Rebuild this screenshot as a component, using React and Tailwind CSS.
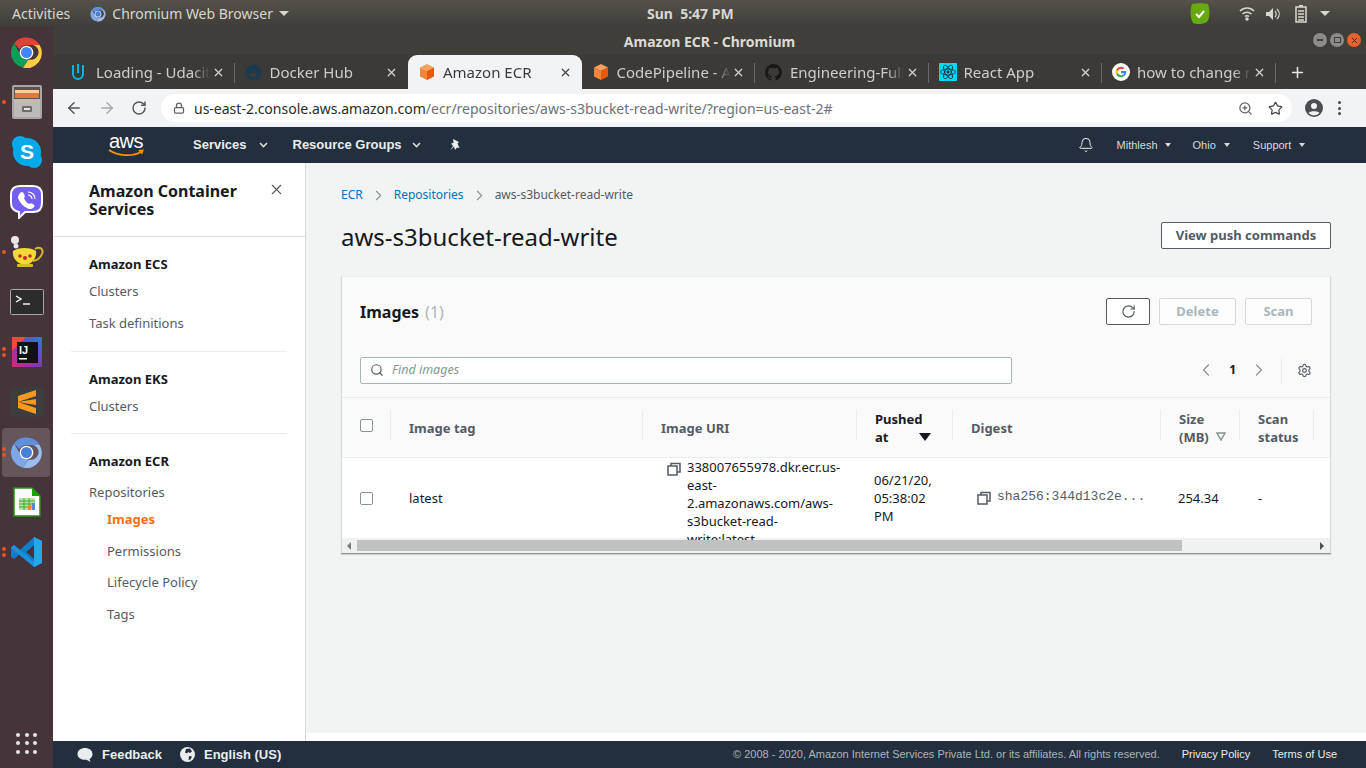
import React from "react";
import { ArrowLeft, ArrowRight, RotateCw, Lock, Search, ZoomIn, Star, Bell, X, Plus, ChevronLeft, ChevronRight, Settings } from "lucide-react";

const ubuntu = "font-['Noto_Sans',sans-serif]";
const arial = "font-['Liberation_Sans',Arial,sans-serif]";

/* ── Small drawn icons ─────────────────────────── */
function ChromeLogo({ size = 34, washed = false }) {
  const c = washed
    ? ["#5f8fe0", "#7fa6e8", "#9cbcf0", "#4a7fd8", "#fff"]
    : ["#db4437", "#0f9d58", "#ffcd40", "#4285f4", "#fff"];
  return (
    <svg width={size} height={size} viewBox="0 0 48 48">
      <path fill={c[0]} d="M24 2a22 22 0 0 1 19 11H24a11 11 0 0 0-10 6L6 11A22 22 0 0 1 24 2z" />
      <path fill={c[1]} d="M6 11l9.500 17a11 11 0 0 0 11.500 6L19 46A22 22 0 0 1 6 11z" />
      <path fill={c[2]} d="M43 13a22 22 0 0 1-24 33l8-12a11 11 0 0 0 7-21z" />
      <circle cx="24" cy="24" r="10" fill={c[4]} />
      <circle cx="24" cy="24" r="8" fill={c[3]} />
    </svg>
  );
}

function Cube({ size = 18 }) {
  return (
    <svg width={size} height={size} viewBox="0 0 18 18">
      <path fill="#f7a15c" d="M9 1l7 3.500L9 8 2 4.500z" />
      <path fill="#f58536" d="M2 4.500L9 8v9l-7-3.500z" />
      <path fill="#e8590c" d="M16 4.500L9 8v9l7-3.500z" />
    </svg>
  );
}

function CopyIcon() {
  return (
    <svg width="14" height="14" viewBox="0 0 14 14" fill="none" stroke="#545b64" strokeWidth="1.500">
      <rect x="1" y="4" width="9" height="9" />
      <path d="M4 4V1.500h9V10h-3" />
    </svg>
  );
}

function Caret({ className = "" }) {
  return <span className={`inline-block w-0 h-0 border-l-[3.500px] border-r-[3.500px] border-t-[4px] border-l-transparent border-r-transparent border-t-[#d5dbdb] ${className}`} />;
}

function NavChevron() {
  return (
    <svg width="9" height="6" viewBox="0 0 9 6" fill="none" stroke="#d5dbdb" strokeWidth="1.600">
      <path d="M1 1l3.500 3.500L8 1" />
    </svg>
  );
}

/* ── Dock ──────────────────────────────────────── */
function DockItem({ dots = 0, active, children }) {
  return (
    <div className="relative h-[50px] flex items-center justify-center shrink-0">
      {active && <div className="absolute left-[2px] top-[1px] w-[48px] h-[49px] rounded bg-[#64565a]" />}
      {dots > 0 && (
        <div className="absolute left-[2px] top-1/2 -translate-y-1/2 flex flex-col gap-[2px]">
          {Array.from({ length: dots }).map((_, i) => (
            <div key={i} className="w-[4px] h-[4px] rounded-full bg-[#e95420]" />
          ))}
        </div>
      )}
      <div className="relative flex items-center justify-center">{children}</div>
    </div>
  );
}

function Dock() {
  return (
    <aside className="w-[53px] shrink-0 bg-[#45343a] flex flex-col">
      <DockItem><ChromeLogo size={33} /></DockItem>
      <DockItem dots={1}>
        <svg width="32" height="36" viewBox="0 0 32 36">
          <rect x="1" y="1" width="30" height="34" rx="2" fill="#a9a7a3" />
          <rect x="3" y="3" width="26" height="12" fill="#5d5350" />
          <rect x="4" y="6" width="24" height="3" fill="#f4d39a" />
          <rect x="4" y="9" width="24" height="5" fill="#e8753c" />
          <rect x="3" y="15" width="26" height="18" fill="#bdbbb7" />
          <rect x="11" y="22" width="10" height="6" rx="1" fill="#6f6d69" />
          <rect x="13" y="24" width="6" height="2" fill="#e8e8e8" />
        </svg>
      </DockItem>
      <DockItem>
        <svg width="32" height="34" viewBox="0 0 32 34">
          <circle cx="9" cy="9" r="8" fill="#03a9e8" />
          <circle cx="23" cy="25" r="8" fill="#03a9e8" />
          <circle cx="16" cy="17" r="14" fill="#03a9e8" />
          <text x="16" y="24" textAnchor="middle" fill="#fff" fontSize="21" fontWeight="700" fontFamily="Liberation Sans">S</text>
        </svg>
      </DockItem>
      <DockItem>
        <svg width="33" height="34" viewBox="0 0 33 34">
          <path fill="#7360f2" stroke="#fff" strokeWidth="2" d="M10 1h13c6 0 9 3 9 9v8c0 6-3 9-9 9H15l-6 6v-6c-5-1-8-4-8-9v-8c0-6 3-9 9-9z" />
          <path fill="#fff" d="M10 8c2-2 3-1 4 1s1 3 0 4c1 3 3 5 5 6 1-1 2-1 4 0s2 3 0 4c-2 2-5 1-8-1s-6-6-7-9c0-2 1-4 2-5z" />
          <path fill="none" stroke="#fff" strokeWidth="1.200" d="M18 7c4 0 7 3 7 7M18 10c2 0 4 2 4 4" />
        </svg>
      </DockItem>
      <DockItem dots={1}>
        <svg width="36" height="34" viewBox="0 0 36 34">
          <circle cx="6" cy="5" r="4" fill="#e8e8e8" />
          <circle cx="7" cy="11" r="2.500" fill="#e8e8e8" />
          <path fill="none" stroke="#d9b92c" strokeWidth="2" d="M26 14c5-3 9 0 7 5s-5 6-9 7" />
          <path fill="#f2d935" d="M4 16c5-4 18-4 23 0 1 6-3 11-7 13H12C7 27 3 22 4 16z" />
          <rect x="8" y="29" width="16" height="3" rx="1" fill="#d9b92c" />
          <circle cx="11" cy="21" r="1.800" fill="#c8242c" />
          <circle cx="16" cy="23" r="2" fill="#c8242c" />
          <circle cx="21" cy="21" r="1.800" fill="#c8242c" />
        </svg>
      </DockItem>
      <DockItem>
        <svg width="34" height="26" viewBox="0 0 34 26">
          <rect x="0.500" y="0.500" width="33" height="25" rx="1" fill="#2c2c2c" stroke="#a9a9a9" />
          <path fill="none" stroke="#fff" strokeWidth="1.400" d="M6 7l5 3-5 3" />
          <path stroke="#fff" strokeWidth="1.400" d="M13 15h7" />
        </svg>
      </DockItem>
      <DockItem dots={2}>
        <svg width="30" height="30" viewBox="0 0 30 30">
          <defs>
            <linearGradient id="ij" x1="0" y1="1" x2="1" y2="0">
              <stop offset="0" stopColor="#d4277a" />
              <stop offset="0.500" stopColor="#7a3bb8" />
              <stop offset="1" stopColor="#2a7be4" />
            </linearGradient>
          </defs>
          <rect width="30" height="30" fill="url(#ij)" />
          <path fill="#f04a3a" d="M0 0h14L0 14z" />
          <rect x="5" y="5" width="21" height="21" fill="#111" />
          <text x="7" y="17" fill="#fff" fontSize="11" fontWeight="700" fontFamily="Liberation Sans">IJ</text>
          <rect x="7" y="21" width="8" height="1.500" fill="#fff" />
        </svg>
      </DockItem>
      <DockItem>
        <svg width="34" height="30" viewBox="0 0 34 30">
          <rect width="34" height="30" rx="3" fill="#3d3d3d" />
          <path fill="#f89b1c" d="M8 9l18-6v6L8 15zM8 15l18 6v6L8 21zM26 12v6L8 15z" />
        </svg>
      </DockItem>
      <DockItem dots={2} active><ChromeLogo size={33} washed /></DockItem>
      <DockItem>
        <svg width="28" height="30" viewBox="0 0 28 30">
          <path fill="#fff" stroke="#2e8b1e" strokeWidth="1.500" d="M1 1h18l8 8v20H1z" />
          <path fill="#18a303" d="M19 1l8 8h-8z" />
          <rect x="6" y="11" width="16" height="12" fill="#b6e2a5" />
          <path stroke="#4aa832" d="M6 14h16M6 17h16M6 20h16M11 11v12M16 11v12" />
          <rect x="15" y="18" width="3" height="5" fill="#e8912a" />
          <rect x="19" y="16" width="3" height="7" fill="#4d8bd8" />
        </svg>
      </DockItem>
      <DockItem dots={2}>
        <svg width="32" height="32" viewBox="0 0 32 32">
          <path fill="#0d7fc9" d="M23 1l8 4v22l-8 4L9 18l-6 5-3-2v-10l3-2 6 5z" />
          <path fill="#2aa5ec" d="M23 1l8 4v22l-8 4zM23 9l-8 7 8 7z" />
          <path fill="#45343a" d="M23 9v14l-8-7z" />
          <path fill="#1a91dc" d="M3 9l20 17v5L0 12z" />
        </svg>
      </DockItem>
      <div className="mt-auto h-[50px] flex items-center justify-center">
        <div className="grid grid-cols-3 gap-x-[4.500px] gap-y-[4.500px]">
          {Array.from({ length: 9 }).map((_, i) => (
            <div key={i} className="w-[4px] h-[4px] rounded-full bg-[#e8e4e4]" />
          ))}
        </div>
      </div>
    </aside>
  );
}

/* ── Browser tabs ──────────────────────────────── */
const tabs = [
  { title: "Loading - Udacity", icon: "udacity" },
  { title: "Docker Hub", icon: "docker" },
  { title: "Amazon ECR", icon: "cube", active: true },
  { title: "CodePipeline - AWS", icon: "cube" },
  { title: "Engineering-Fullstack", icon: "github" },
  { title: "React App", icon: "react" },
  { title: "how to change react", icon: "google" },
];

function TabIcon({ icon }) {
  if (icon === "cube") return <Cube />;
  if (icon === "udacity")
    return (
      <svg width="14" height="18" viewBox="0 0 14 18" fill="none" stroke="#02b3e4" strokeWidth="2">
        <path d="M2 2v9a5 5 0 0 0 10 0V2M7 1v9" />
      </svg>
    );
  if (icon === "docker")
    return (
      <svg width="17" height="17" viewBox="0 0 17 17">
        <circle cx="8.500" cy="8.500" r="8" fill="#1c3a4e" />
        <path d="M4 9h7c1 0 2-1 2-2-1 4-3 6-6 6-2 0-3-2-3-4z" fill="#3b3a36" />
      </svg>
    );
  if (icon === "github")
    return (
      <svg width="17" height="17" viewBox="0 0 16 16" fill="#191717">
        <path d="M8 0a8 8 0 0 0-2.500 15.600c.4.100.500-.200.500-.400v-1.400c-2.200.500-2.700-1-2.700-1-.400-.900-.900-1.200-.900-1.200-.700-.500.100-.500.100-.500.800.100 1.200.800 1.200.800.700 1.200 1.900.900 2.300.700.100-.500.300-.900.500-1.100-1.800-.200-3.600-.900-3.600-4 0-.900.300-1.600.800-2.100-.100-.200-.400-1 .100-2.100 0 0 .700-.200 2.200.800a7.600 7.600 0 0 1 4 0c1.500-1 2.200-.800 2.200-.800.400 1.100.200 1.900.100 2.100.500.600.800 1.300.800 2.100 0 3.100-1.900 3.700-3.700 3.900.300.300.600.700.600 1.500v2.200c0 .200.100.500.600.400A8 8 0 0 0 8 0z" />
      </svg>
    );
  if (icon === "react")
    return (
      <svg width="18" height="18" viewBox="0 0 18 18">
        <rect width="18" height="18" rx="1" fill="#00d8ff" />
        <g fill="none" stroke="#20232a" strokeWidth="0.800">
          <ellipse cx="9" cy="9" rx="7.500" ry="3" />
          <ellipse cx="9" cy="9" rx="7.500" ry="3" transform="rotate(60 9 9)" />
          <ellipse cx="9" cy="9" rx="7.500" ry="3" transform="rotate(120 9 9)" />
        </g>
        <circle cx="9" cy="9" r="1.400" fill="#20232a" />
      </svg>
    );
  return (
    <svg width="18" height="18" viewBox="0 0 48 48">
      <circle cx="24" cy="24" r="24" fill="#fff" />
      <path fill="#ea4335" d="M24 10c3.500 0 6.500 1.300 8.800 3.400l-4 4A8 8 0 0 0 24 15.500a8.500 8.500 0 0 0-8 5.700l-4.700-3.600A14 14 0 0 1 24 10z" />
      <path fill="#fbbc05" d="M11.300 17.600l4.700 3.600a8.500 8.500 0 0 0 0 5.600l-4.700 3.600a14 14 0 0 1 0-12.800z" />
      <path fill="#34a853" d="M16 26.800a8.500 8.500 0 0 0 12.700 4.400l4.500 3.500A14 14 0 0 1 11.300 30.400z" />
      <path fill="#4285f4" d="M38 24c0 4.200-1.700 8-4.800 10.700l-4.500-3.500a7 7 0 0 0 3-4.200H24v-5.500h13.700c.2.800.3 1.600.3 2.500z" />
    </svg>
  );
}

function Tab({ tab, last }) {
  return (
    <div className={`relative w-[173.500px] shrink-0 h-[34px] flex items-center pl-[10px] pr-[10px] ${tab.active ? "bg-[#f2f3f5] rounded-t-[9px]" : ""}`}>
      <span className="w-[24px] shrink-0 flex items-center"><TabIcon icon={tab.icon} /></span>
      <span className={`ml-[1px] w-[114px] overflow-hidden whitespace-nowrap text-[15px] [mask-image:linear-gradient(90deg,#000_85%,transparent)] ${tab.active ? "text-[#3a3a3a]" : "text-[#cfcdc8]"}`}>
        {tab.title}
      </span>
      <X size={13} strokeWidth={2.200} className={`ml-auto ${tab.active ? "text-[#444]" : "text-[#d8d6d1]"}`} />
      {!tab.active && !last && <div className="absolute right-0 top-[8px] h-[20px] w-px bg-[#6b6a65]" />}
    </div>
  );
}

function BrowserChrome() {
  return (
    <div className={ubuntu}>
      <div className="h-[28px] bg-[#3f3e39] relative flex items-center justify-center">
        <span className="text-[14px] font-bold text-[#dcdad5]">Amazon ECR - Chromium</span>
        <div className="absolute right-[5px] top-[6px] flex gap-[3px]">
          <div className="w-[14px] h-[14px] rounded-full bg-[#8d8b85] flex items-center justify-center"><div className="w-[6px] h-[1.500px] bg-[#3f3e39]" /></div>
          <div className="w-[14px] h-[14px] rounded-full bg-[#8d8b85] flex items-center justify-center"><div className="w-[7px] h-[6px] border border-[#3f3e39]" /></div>
          <div className="w-[14px] h-[14px] rounded-full bg-[#e9622c] flex items-center justify-center"><X size={9} strokeWidth={2.500} className="text-[#4a2010]" /></div>
        </div>
      </div>
      <div className="h-[34px] bg-[#3b3a36] flex items-center pl-[8px]">
        {tabs.map((t, i) => (
          <Tab key={t.title} tab={t} last={i === 1} />
        ))}
        <Plus size={17} strokeWidth={2.200} className="ml-[13px] text-[#e8e6e1]" />
      </div>
      <div className="h-[38px] bg-[#f2f3f5] flex items-center pl-[12px]">
        <ArrowLeft size={18} strokeWidth={2} className="text-[#55585c]" />
        <ArrowRight size={18} strokeWidth={2} className="ml-[15px] text-[#a9abae]" />
        <RotateCw size={16} strokeWidth={2.200} className="ml-[15px] text-[#55585c]" />
        <div className="ml-[14px] w-[1131px] h-[28px] rounded-full bg-white flex items-center pl-[12px] pr-[9px]">
          <Lock size={12} strokeWidth={2.500} className="text-[#5f6368]" />
          <span className="ml-[9px] text-[14px] whitespace-nowrap text-[#6e7175]">
            <span className="text-[#2b2b2b]">us-east-2.console.aws.amazon.com</span>/ecr/repositories/aws-s3bucket-read-write/?region=us-east-2#
          </span>
          <ZoomIn size={15} className="ml-auto text-[#5f6368]" />
          <Star size={15} strokeWidth={2} className="ml-[15px] text-[#45484c]" />
        </div>
        <svg className="ml-[13px]" width="18" height="18" viewBox="0 0 18 18">
          <circle cx="9" cy="9" r="9" fill="#4a4d51" />
          <circle cx="9" cy="7" r="3" fill="#f2f3f5" />
          <path d="M3.500 14c1.500-2.500 9.500-2.500 11 0a7.500 7.500 0 0 1-11 0z" fill="#f2f3f5" />
        </svg>
        <div className="ml-[15px] flex flex-col gap-[2.500px]">
          <div className="w-[3px] h-[3px] rounded-full bg-[#45484c]" />
          <div className="w-[3px] h-[3px] rounded-full bg-[#45484c]" />
          <div className="w-[3px] h-[3px] rounded-full bg-[#45484c]" />
        </div>
      </div>
    </div>
  );
}

/* ── AWS console header / footer ───────────────── */
function AwsNav() {
  return (
    <header className={`h-[36px] bg-[#232f3e] flex items-center text-[#eaeded] ${arial}`}>
      <div className="ml-[55px] w-[36px] h-[28px] relative flex justify-center">
        <span className="text-[20px] leading-[20px] text-white tracking-[-0.5px]">aws</span>
        <svg className="absolute left-0 bottom-[1px]" width="37" height="9" viewBox="0 0 37 9" fill="none">
          <path stroke="#f79400" strokeWidth="1.800" d="M1 1c9 6 23 7 32 2" />
          <path fill="#f79400" d="M30 1l6-.5-2 5z" />
        </svg>
      </div>
      <span className="ml-[49px] text-[13px] font-bold">Services</span>
      <span className="ml-[12px]"><NavChevron /></span>
      <span className="ml-[25px] text-[13px] font-bold">Resource Groups</span>
      <span className="ml-[10px]"><NavChevron /></span>
      <svg className="ml-[28px]" width="13" height="13" viewBox="0 0 13 13" fill="#eaeded">
        <path d="M4 0l6 3-1.500 1.500L10.500 9 8 8.500 6 11 5 7.500 1 11.500l3-4.500L2 4.500 4.500 4z" />
      </svg>
      <Bell size={16} strokeWidth={1.500} className="ml-[616px]" />
      <span className="ml-[23px] text-[11px] text-[#d5dbdb]">Mithlesh</span>
      <span className="ml-[7px] flex"><Caret /></span>
      <span className="ml-[22px] text-[11px] text-[#d5dbdb]">Ohio</span>
      <span className="ml-[8px] flex"><Caret /></span>
      <span className="ml-[23px] text-[11px] text-[#d5dbdb]">Support</span>
      <span className="ml-[8px] flex"><Caret /></span>
    </header>
  );
}

function Footer() {
  return (
    <footer className={`h-[27px] bg-[#232f3e] flex items-center text-[11px] ${arial}`}>
      <svg className="ml-[24px]" width="16" height="16" viewBox="0 0 16 16" fill="#eaeded">
        <path d="M8 1c4 0 7.500 2.300 7.500 6 0 2.500-1.500 4.300-3 5l1 3-4-2.200C4 13 .500 10.700.500 7 .500 3.300 4 1 8 1z" />
      </svg>
      <span className="ml-[9px] text-[13px] font-bold text-[#eaeded]">Feedback</span>
      <svg className="ml-[18px]" width="15" height="15" viewBox="0 0 15 15">
        <circle cx="7.500" cy="7.500" r="7.500" fill="#eaeded" />
        <path fill="#232f3e" d="M6 2l4-.5 2 3-2 1.500-2-1-1 1.500-2-1zM9 9l3 .5-1.500 3-2 .5z" />
      </svg>
      <span className="ml-[9px] text-[13px] font-bold text-[#eaeded]">English (US)</span>
      <span className="ml-auto text-[#aab7b8]">© 2008 - 2020, Amazon Internet Services Private Ltd. or its affiliates. All rights reserved.</span>
      <span className="ml-[22px] text-[#eaeded]">Privacy Policy</span>
      <span className="ml-[22px] mr-[29px] text-[#eaeded]">Terms of Use</span>
    </footer>
  );
}

/* ── Sidebar ───────────────────────────────────── */
function SideHeading({ children }) {
  return <div className="h-[20px] leading-[20px] text-[13px] font-bold text-[#16191f]">{children}</div>;
}

function SideLink({ children, sub, active, className = "" }) {
  return (
    <div className={`h-[20px] leading-[20px] text-[13px] ${sub ? "pl-[18px]" : ""} ${active ? "font-bold text-[#ec7211]" : "text-[#545b64]"} ${className}`}>
      {children}
    </div>
  );
}

function Sidebar() {
  return (
    <nav className="w-[253px] shrink-0 bg-white border-r border-[#d5dbdb]">
      <div className="h-[74px] border-b border-[#d5dbdb] pl-[36px] pr-[20px] pt-[19px] flex justify-between">
        <div className="text-[16px] leading-[18px] font-bold text-[#16191f] w-[170px]">Amazon Container Services</div>
        <X size={17} strokeWidth={1.600} className="text-[#545b64] mt-[-1px]" />
      </div>
      <div className="px-[18px]">
        <div className="pl-[18px] pt-[17px] pb-[18px] border-b border-[#eaeded]">
          <SideHeading>Amazon ECS</SideHeading>
          <SideLink className="mt-[7px]">Clusters</SideLink>
          <SideLink className="mt-[12px]">Task definitions</SideLink>
        </div>
        <div className="pl-[18px] pt-[17px] pb-[17px] border-b border-[#eaeded]">
          <SideHeading>Amazon EKS</SideHeading>
          <SideLink className="mt-[7px]">Clusters</SideLink>
        </div>
        <div className="pl-[18px] pt-[17px]">
          <SideHeading>Amazon ECR</SideHeading>
          <SideLink className="mt-[11px]">Repositories</SideLink>
          <SideLink sub active className="mt-[7px]">Images</SideLink>
          <SideLink sub className="mt-[12px]">Permissions</SideLink>
          <SideLink sub className="mt-[11px]">Lifecycle Policy</SideLink>
          <SideLink sub className="mt-[12px]">Tags</SideLink>
        </div>
      </div>
    </nav>
  );
}

/* ── Images table ──────────────────────────────── */
function Check() {
  return <div className="w-[13px] h-[13px] rounded-[2px] border border-[#879596] bg-white" />;
}

function HeadCell({ w, children, last }) {
  return (
    <div style={{ width: w }} className="relative shrink-0 h-full flex items-center pl-[18px] text-[13px] leading-[18px] font-bold text-[#545b64]">
      {children}
      {!last && <div className="absolute right-0 top-[12px] h-[30px] w-px bg-[#eaeded]" />}
    </div>
  );
}

function BodyCell({ w, children, className = "" }) {
  return (
    <div style={{ width: w }} className={`shrink-0 h-full flex items-center text-[13px] leading-[18px] text-[#16191f] ${className}`}>
      {children}
    </div>
  );
}

function SmallButton({ children, disabled }) {
  return (
    <div className={`h-[27px] flex items-center justify-center rounded-[2px] border text-[13px] font-bold ${disabled ? "border-[#d5dbdb] text-[#aab7b8] bg-white/50" : "border-[#545b64] text-[#545b64] bg-white"}`}>
      {children}
    </div>
  );
}

function ImagesCard() {
  return (
    <section className="mt-[23px] w-[990px] bg-[#fafafa] border-t border-[#eaeded] border-l border-r border-l-[#d5dbdb] border-r-[#d5dbdb] border-b-[1px] border-b-[#879596] shadow-[0_1px_1px_rgba(0,28,36,0.15)]">
      <div className="h-[121px] border-b border-[#eaeded] pl-[18px] pr-[18px] flex flex-col">
        <div className="mt-[20px] h-[29px] flex items-center">
          <span className="text-[16px] font-bold text-[#16191f]">Images</span>
          <span className="ml-[6px] text-[16px] text-[#aab7b8]">(1)</span>
          <div className="ml-auto flex gap-[9px]">
            <div className="w-[44px]"><SmallButton><RotateCw size={15} strokeWidth={1.800} /></SmallButton></div>
            <div className="w-[77px]"><SmallButton disabled>Delete</SmallButton></div>
            <div className="w-[67px]"><SmallButton disabled>Scan</SmallButton></div>
          </div>
        </div>
        <div className="mt-[30px] h-[28px] flex items-center">
          <div className="w-[655px] h-[27px] rounded-[2px] border border-[#aab7b8] bg-white flex items-center pl-[9px]">
            <Search size={14} strokeWidth={2} className="text-[#545b64]" />
            <span className="ml-[8px] text-[12.500px] italic text-[#879596]">Find images</span>
          </div>
          <ChevronLeft size={20} strokeWidth={1.500} className="ml-[184px] text-[#879596]" />
          <span className="ml-[13px] text-[12px] font-bold text-[#16191f]">1</span>
          <ChevronRight size={20} strokeWidth={1.500} className="ml-[13px] text-[#879596]" />
          <div className="ml-[12px] h-[27px] w-px bg-[#eaeded]" />
          <Settings size={15} strokeWidth={1.800} className="ml-[15px] text-[#545b64]" />
        </div>
      </div>
      <div className="h-[60px] border-b border-[#eaeded] flex">
        <div className="w-[49px] h-full relative flex items-center pl-[18px] pb-[4px]">
          <Check />
          <div className="absolute right-0 top-[12px] h-[30px] w-px bg-[#eaeded]" />
        </div>
        <HeadCell w={252}>Image tag</HeadCell>
        <HeadCell w={214}>Image URI</HeadCell>
        <HeadCell w={96}>
          <div className="w-full text-[#16191f]">
            <div>Pushed</div>
            <div className="flex items-center">at<span className="ml-[31px] w-0 h-0 border-l-[6px] border-r-[6px] border-t-[8px] border-l-transparent border-r-transparent border-t-[#16191f]" /></div>
          </div>
        </HeadCell>
        <HeadCell w={208}>Digest</HeadCell>
        <HeadCell w={79}>
          <div>
            <div>Size</div>
            <div className="flex items-center">(MB)<svg className="ml-[7px]" width="10" height="9" viewBox="0 0 10 9" fill="none" stroke="#879596" strokeWidth="1.500"><path d="M1 1h8L5 8z" /></svg></div>
          </div>
        </HeadCell>
        <HeadCell w={74}>
          <div>
            <div>Scan</div>
            <div>status</div>
          </div>
        </HeadCell>
      </div>
      <div className="h-[80px] bg-white flex">
        <BodyCell w={49} className="pl-[18px]"><Check /></BodyCell>
        <BodyCell w={252} className="pl-[18px]">latest</BodyCell>
        <BodyCell w={214} className="pl-[24px] items-start gap-[6px]">
          <span className="mt-[4px] shrink-0"><CopyIcon /></span>
          <span className="w-[155px] break-words">338007655978.dkr.ecr.us-east-2.amazonaws.com/aws-s3bucket-read-write:latest</span>
        </BodyCell>
        <BodyCell w={96} className="pl-[17px]"><span className="w-[70px]">06/21/20, 05:38:02 PM</span></BodyCell>
        <BodyCell w={208} className="pl-[24px] gap-[6px]">
          <CopyIcon />
          <span className={`text-[13px] text-[#545b64] font-['Liberation_Mono',monospace] whitespace-nowrap mb-[2px]`}>sha256:344d13c2e...</span>
        </BodyCell>
        <BodyCell w={79} className="pl-[17px]">254.34</BodyCell>
        <BodyCell w={74} className="pl-[18px]">-</BodyCell>
      </div>
      <div className="h-[15px] bg-[#f1f1f1] flex items-center">
        <span className="ml-[5px] w-0 h-0 border-t-[4px] border-b-[4px] border-r-[4px] border-t-transparent border-b-transparent border-r-[#7a7a7a]" />
        <div className="ml-[6px] h-[11px] w-[825px] bg-[#c1c1c1]" />
        <span className="ml-auto mr-[6px] w-0 h-0 border-t-[4px] border-b-[4px] border-l-[4px] border-t-transparent border-b-transparent border-l-[#505050]" />
      </div>
    </section>
  );
}

function MainPanel() {
  return (
    <main className="flex-1 bg-[#f2f3f3] h-[570px] pl-[35px] pt-[23px] pr-[36px]">
      <div className="flex items-center h-[18px] text-[12px] text-[#545b64]">
        <span className="text-[#0073bb]">ECR</span>
        <ChevronRight size={17} strokeWidth={1.500} className="mx-[7px] text-[#879596]" />
        <span className="text-[#0073bb]">Repositories</span>
        <ChevronRight size={17} strokeWidth={1.500} className="mx-[7px] text-[#879596]" />
        <span>aws-s3bucket-read-write</span>
      </div>
      <div className="mt-[17px] h-[32px] flex items-center justify-between">
        <h1 className="text-[24px] text-[#16191f]">aws-s3bucket-read-write</h1>
        <div className="w-[170px] h-[27px] mt-[-3px] flex items-center justify-center rounded-[2px] border border-[#545b64] bg-white text-[13px] font-bold text-[#545b64]">
          View push commands
        </div>
      </div>
      <ImagesCard />
    </main>
  );
}

/* ── Ubuntu top bar ────────────────────────────── */
function TopBar() {
  return (
    <div className={`h-[27px] bg-gradient-to-b from-[#55524b] to-[#3f3d38] flex items-center text-[14px] text-[#d8d6d0] ${ubuntu}`}>
      <span className="ml-[12px]">Activities</span>
      <span className="ml-[20px] flex"><ChromeLogo size={16} washed /></span>
      <span className="ml-[6px]">Chromium Web Browser</span>
      <span className="ml-[6px] w-0 h-0 border-l-[5px] border-r-[5px] border-t-[5px] border-l-transparent border-r-transparent border-t-[#d8d6d0]" />
      <span className="ml-[358px] whitespace-pre font-bold">Sun  5:47 PM</span>
      <svg className="ml-[454px]" width="24" height="24" viewBox="0 0 24 24">
        <path fill="#68a90f" d="M4 2c5-1 11-1 16 0 2 6 2 14-1 18-3 2-10 3-14 1C2 16 2 8 4 2z" />
        <path fill="none" stroke="#fff" strokeWidth="2" d="M8 12l3 3 5-6" />
      </svg>
      <svg className="ml-[27px]" width="16" height="15" viewBox="0 0 16 15" fill="none" stroke="#d8d6d0" strokeWidth="1.500">
        <path d="M1 5c4-4 10-4 14 0M3.500 8c2.500-2.500 6.500-2.500 9 0M6 10.500c1-1 3-1 4 0" />
        <circle cx="8" cy="13" r="1" fill="#d8d6d0" />
      </svg>
      <svg className="ml-[11px]" width="14" height="14" viewBox="0 0 14 14">
        <path fill="#d8d6d0" d="M0 5h3l4-4v12L3 9H0z" />
        <path fill="none" stroke="#d8d6d0" strokeWidth="1.200" d="M9 4c1.500 1.500 1.500 4.500 0 6M11 2c3 3 3 7 0 10" />
      </svg>
      <svg className="ml-[15px]" width="12" height="18" viewBox="0 0 12 18">
        <rect x="4" y="0" width="4" height="2" fill="#d8d6d0" />
        <rect x="1" y="2" width="10" height="15" fill="none" stroke="#d8d6d0" strokeWidth="1.500" />
        <path stroke="#d8d6d0" strokeWidth="1.500" d="M3 6h6M3 9h6M3 12h6M3 15h6" />
      </svg>
      <span className="ml-[13px] w-0 h-0 border-l-[5px] border-r-[5px] border-t-[5px] border-l-transparent border-r-transparent border-t-[#d8d6d0]" />
    </div>
  );
}

export default function App() {
  return (
    <div className="w-[1366px] h-[768px] overflow-hidden flex flex-col bg-white">
      <TopBar />
      <div className="flex-1 flex min-h-0">
        <Dock />
        <div className="flex-1 min-w-0 flex flex-col">
          <BrowserChrome />
          <AwsNav />
          <div className={`flex-1 flex items-start min-h-0 bg-white ${ubuntu}`}>
            <div className="self-stretch flex"><Sidebar /></div>
            <MainPanel />
          </div>
          <Footer />
        </div>
      </div>
    </div>
  );
}
